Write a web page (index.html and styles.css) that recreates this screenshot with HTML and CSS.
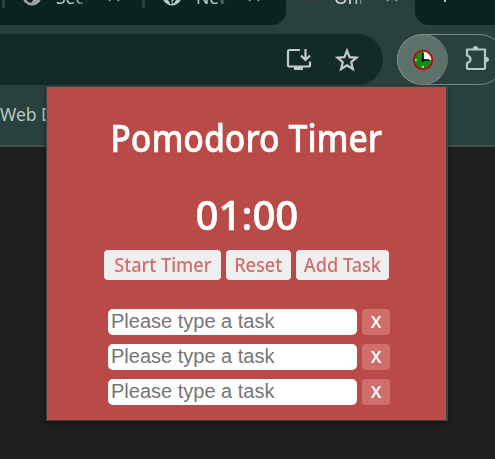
FILE: index.html
```
<!DOCTYPE html>
<html lang="en">
<head>
<meta charset="utf-8">
<title>Pomodoro Timer</title>
<link rel="stylesheet" href="styles.css">
</head>
<body>
<div class="browser">
  <div class="tabs">
    <div class="tab tab-first">
      <svg class="favicon" width="20" height="20" viewBox="0 0 20 20"><circle cx="10" cy="10" r="9.5" fill="#a3a3a8"/><path d="M3 8Q3 16 9 17Q13 14 9 10Q16 14 16 8Z" fill="#0b231f"/></svg>
      <span class="tab-title">Secr</span>
      <svg class="tab-close" width="12" height="12" viewBox="0 0 12 12"><path d="M1 1L11 11M11 1L1 11"/></svg>
    </div>
    <div class="tab tab-second">
      <svg class="favicon" width="20" height="20" viewBox="0 0 20 20"><circle cx="10" cy="10" r="9.5" fill="#aec9c4"/><path d="M2 9L8 12L9 18M18 6L11 17M5 6H15L12 13H8Z" fill="#0b231f" stroke="#0b231f" stroke-width="2"/></svg>
      <span class="tab-title">New</span>
      <svg class="tab-close" width="12" height="12" viewBox="0 0 12 12"><path d="M1 1L11 11M11 1L1 11"/></svg>
    </div>
    <div class="tab tab-active">
      <span class="active-icon"></span>
      <span class="tab-title">Onli</span>
      <svg class="tab-close" width="12" height="12" viewBox="0 0 12 12"><path d="M1 1L11 11M11 1L1 11"/></svg>
    </div>
    <div class="new-tab"><span class="plus"></span></div>
  </div>
  <div class="toolbar">
    <div class="address">
      <svg width="26" height="24" viewBox="0 0 26 24"><path d="M14 2H3.500Q2 2 2 3.500V17Q2 18.500 3.500 18.500H22.500Q24 18.500 24 17V13.500M19.500 1V11M15 7.500L19.500 12L24 7.500" fill="none" stroke="#c5cbc8" stroke-width="2.200"/><path d="M8 18H17V22H8Z" fill="#c5cbc8"/></svg>
      <svg width="24" height="24" viewBox="0 0 24 24"><path d="M12 2.700L14.600 9.200L21.500 9.700L16.200 14.200L17.900 21L12 17.300L6.100 21L7.800 14.200L2.500 9.700L9.400 9.200Z" fill="none" stroke="#c5cbc8" stroke-width="2.200"/></svg>
    </div>
    <div class="extensions">
      <div class="extension-active">
        <svg width="22" height="22" viewBox="0 0 22 22"><circle cx="11" cy="11" r="9.300" fill="#089316" stroke="#c8040a" stroke-width="1.800"/><path d="M11 11V2.700A8.300 8.300 0 0 1 19.300 11Z" fill="#fff"/><path d="M11 3.500V11H17.500" fill="none" stroke="#000" stroke-width="1.600"/><circle cx="11" cy="11.300" r="1.600"/><path d="M11 17V19M3 11H5" stroke="#fff" stroke-width="1.200"/></svg>
      </div>
      <svg class="puzzle" width="26" height="26" viewBox="0 0 26 26"><path d="M3 4.500H21V22.500Q21 24 19.500 24H4.500Q3 24 3 22.500V18Q6.500 17 6.500 14.200T3 10.500Z" fill="none" stroke="#b1cbc6" stroke-width="2.200" stroke-linejoin="round"/><path d="M8.500 4.500Q9 1 11.500 1T14.500 4.500ZM21 11.500Q25 12 25 14.500T21 17.500Z" fill="#b1cbc6"/></svg>
    </div>
  </div>
  <div class="bookmarks">Web D</div>
</div>
<main class="popup">
  <h1><span>Pomodoro Timer</span></h1>
  <div class="time"><span>01:00</span></div>
  <div class="actions">
    <button class="action start"><span>Start Timer</span></button>
    <button class="action reset"><span>Reset</span></button>
    <button class="action add"><span>Add Task</span></button>
  </div>
  <div class="tasks">
    <div class="task"><input type="text" placeholder="Please type a task"><button class="delete"><span>X</span></button></div>
    <div class="task"><input type="text" placeholder="Please type a task"><button class="delete"><span>X</span></button></div>
    <div class="task"><input type="text" placeholder="Please type a task"><button class="delete"><span>X</span></button></div>
  </div>
</main>
</body>
</html>
```
FILE: styles.css
```
* { box-sizing: border-box; }
body {
  margin: 0;
  width: 495px;
  height: 459px;
  overflow: hidden;
  position: relative;
  background: #1f1f1f;
  font-family: "Noto Sans", sans-serif;
}
.browser { height: 147px; background: #29413c; border-bottom: 2px solid #3f4f4b; }
.tabs { display: flex; height: 25px; overflow: hidden; background: #29413c; }
.tab { display: flex; height: 25px; background: #0b231f; color: #b9d1cc; align-items: flex-start; }
.tab svg, .tab span { flex: none; }
.tab-title { width: 31px; overflow: hidden; margin-top: -15px; font-size: 17.5px; line-height: 25px; white-space: nowrap; -webkit-mask-image: linear-gradient(90deg, #000 65%, transparent); mask-image: linear-gradient(90deg, #000 65%, transparent); }
.favicon { margin-top: -14px; }
.tab-close { margin: -10px 0 0 21px; }
.tab-close path { stroke: #86a19c; stroke-width: 1.6; }
.tab-first { width: 145px; padding-left: 22px; background: linear-gradient(#29413c, #29413c) 2px 0 / 3px 8px no-repeat, linear-gradient(#29413c, #29413c) 142px 0 / 3px 8px no-repeat, #0b231f; }
.tab-first .tab-title { margin-left: 14px; }
.tab-second { width: 141px; padding-left: 17px; border-bottom-right-radius: 14px; }
.tab-second .tab-title { margin-left: 14px; }
.tab-active { width: 129px; padding-left: 14px; background: #29413c; }
.active-icon { width: 20px; height: 2px; margin-top: -1px; background: #39403d; }
.tab-active .tab-title { margin-left: 14px; color: #dce5e2; }
.new-tab { width: 80px; height: 25px; padding-left: 29px; background: #0b231f; border-bottom-left-radius: 14px; }
.plus { display: block; width: 2px; height: 2px; background: #a8c3be; }
.toolbar { display: flex; height: 60px; padding-top: 9px; }
.address { display: flex; align-items: center; justify-content: flex-end; gap: 22px; width: 383px; height: 51px; padding-right: 24px; background: #122b27; border-radius: 0 26px 26px 0; flex: none; }
.extensions { display: flex; flex: none; width: 108px; height: 51px; margin-left: 14px; border: 1px solid #7b8985; border-radius: 26px; }
.extension-active { display: flex; align-items: center; justify-content: center; width: 51px; height: 51px; margin: -1px 0 0 -1px; border: 1px solid #7f8c88; border-right-color: #5e706c; border-radius: 50%; background: #5e706c; }
.address svg:first-child { margin-right: 1px; }
.puzzle { margin: 10px 0 0 16px; }
.bookmarks { height: 60px; padding-top: 17px; color: #b5cac5; font-size: 17.5px; line-height: 24px; white-space: nowrap; }
.popup {
  position: absolute;
  left: 46px;
  top: 86px;
  width: 402px;
  height: 335px;
  padding-top: 28px;
  background: #b94a48;
  border: 1px solid #3d4444;
  border-right-width: 2px;
  box-shadow: 0 2px 5px #0007;
}
h1, .time { display: flex; justify-content: center; margin: 0; color: #fff; font-weight: 500; white-space: nowrap; -webkit-text-stroke: 0.6px #fff; }
h1 { height: 48px; font-size: 38.5px; line-height: 44px; }
h1 span { transform: scaleX(0.876); }
.time { height: 52px; margin-top: 29px; font-size: 39px; line-height: 46px; }
.time span { transform: scaleX(1.03); }
.actions { display: flex; gap: 5px; margin: 6px 0 0 57px; }
button { display: flex; align-items: center; justify-content: center; padding: 0; border: 0; border-radius: 4px; white-space: nowrap; }
.action { height: 30px; background: #efefef; color: #d06e6e; font: 500 19px/30px "Noto Sans", sans-serif; }
.action span { transform: scaleX(0.955); }
.start { width: 117px; }
.reset { width: 65px; }
.add { width: 93px; }
.tasks { display: flex; flex-direction: column; gap: 9px; margin: 29px 0 0 61px; }
.task { display: flex; gap: 5px; }
input { width: 249px; height: 26px; padding: 0 3px 2px; border: 0; border-radius: 5px; background: #fff; font: 20px/24px "Liberation Sans", sans-serif; }
input::placeholder { color: #757575; opacity: 1; }
.delete { width: 28px; height: 26px; background: #d06e6e; color: #fff; font: 600 16px/24px "Noto Sans", sans-serif; }
.delete span { transform: scaleX(1.05); }
```
